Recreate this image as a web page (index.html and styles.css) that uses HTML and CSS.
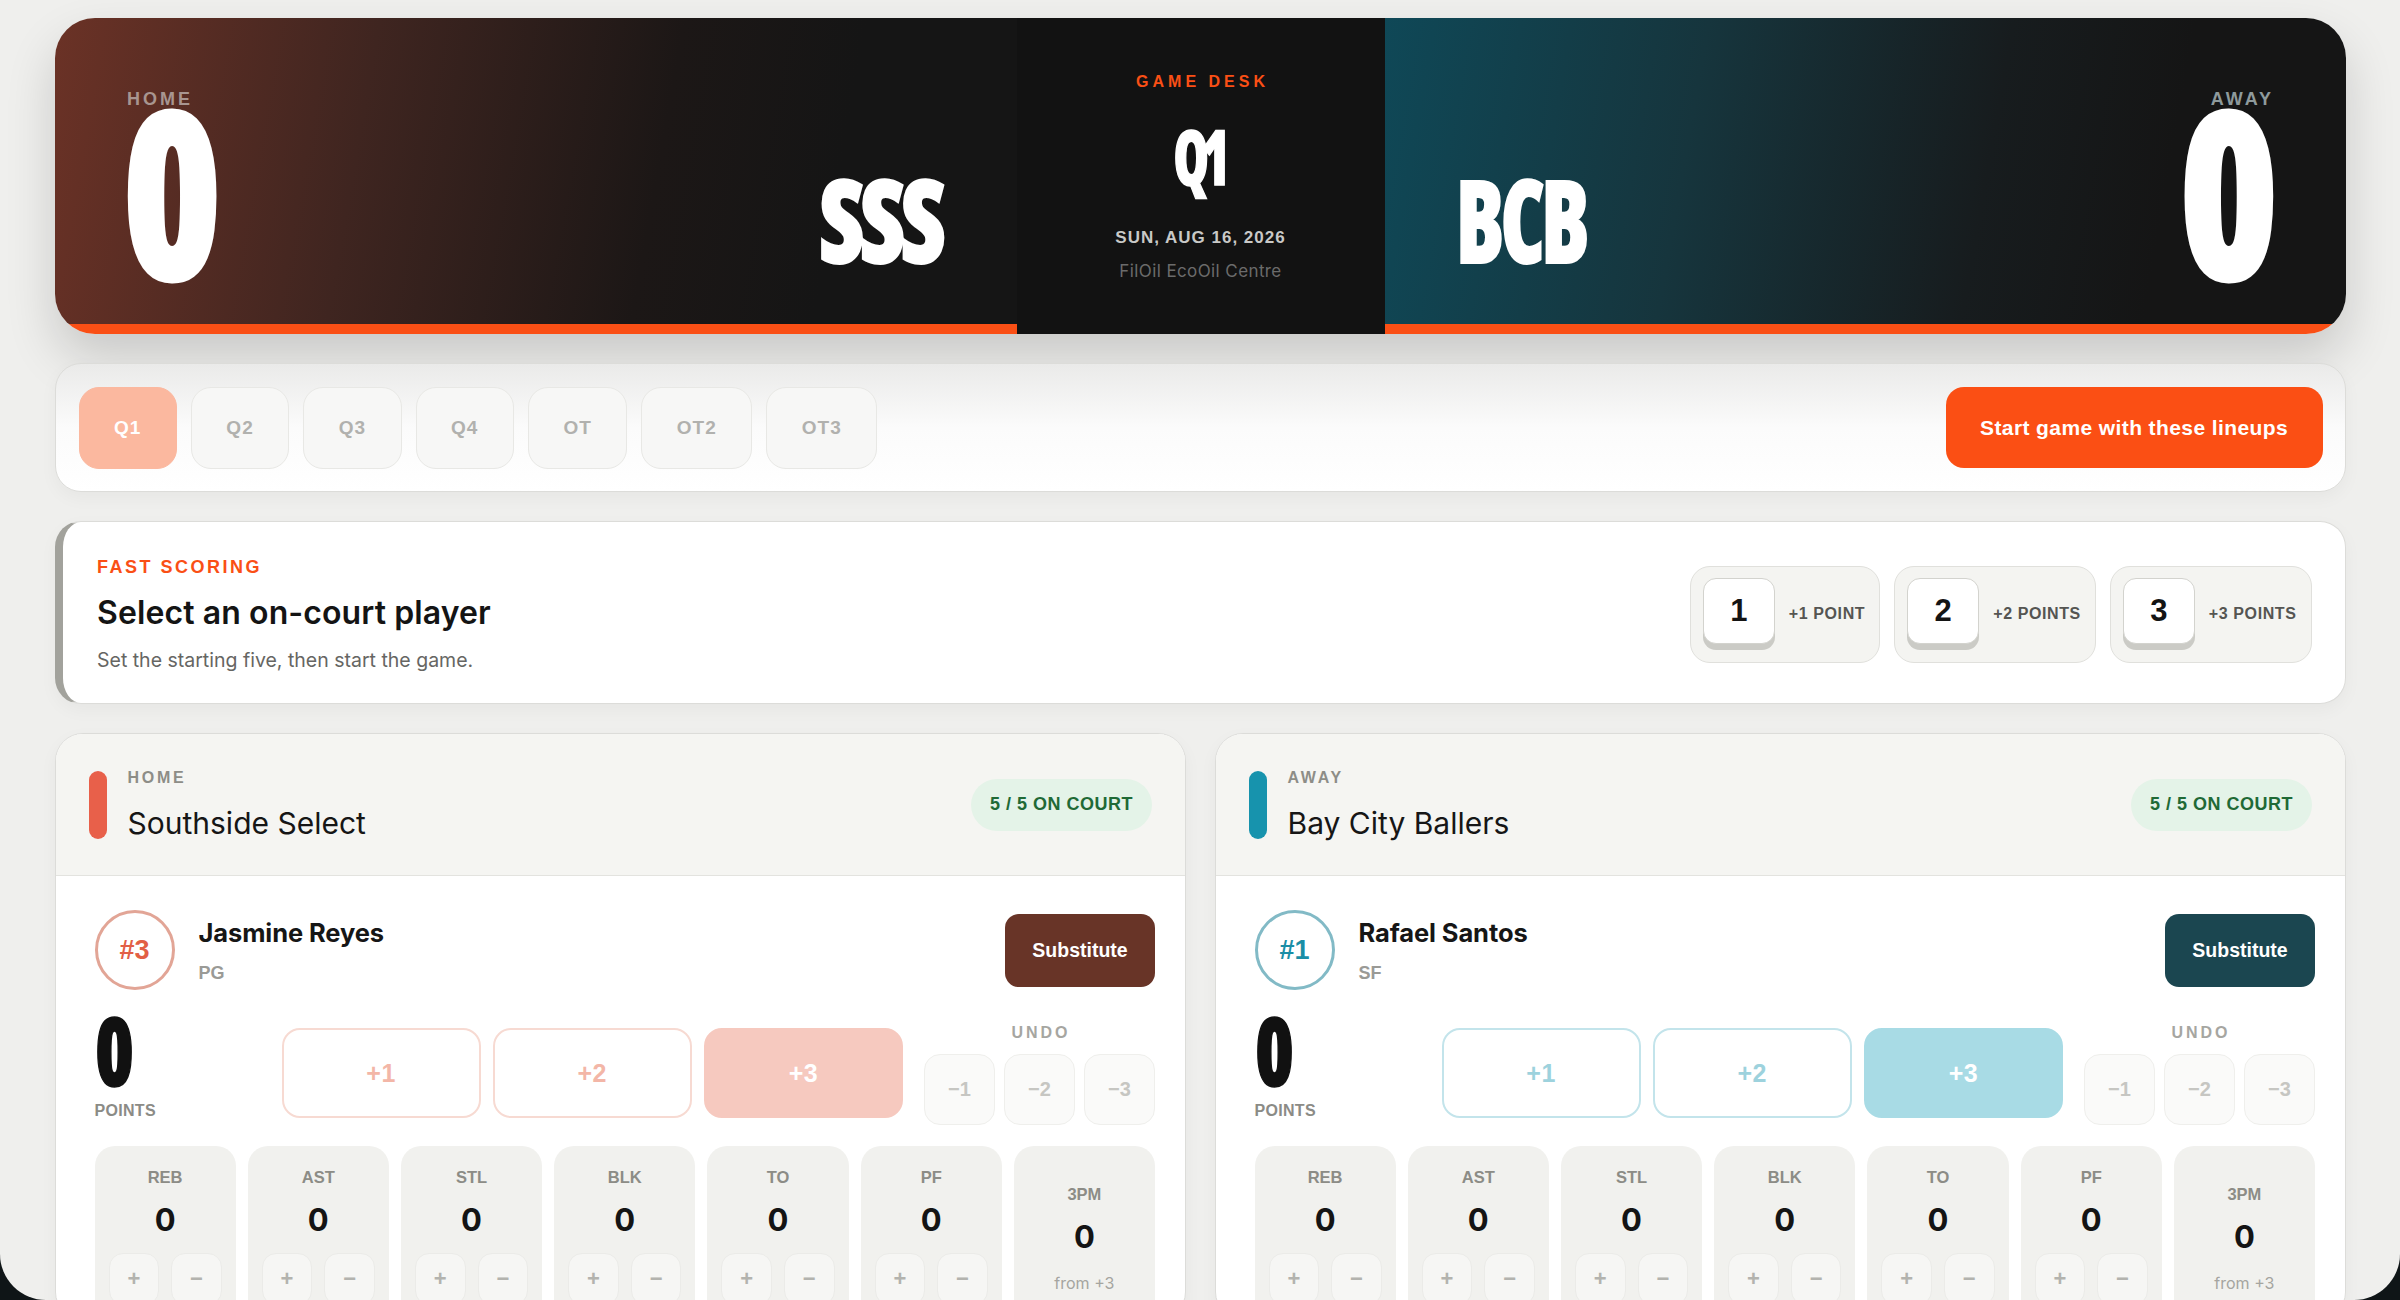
FILE: index.html
```html
<!DOCTYPE html>
<html lang="en">
<head>
<meta charset="utf-8">
<title>Game Desk</title>
<link rel="stylesheet" href="styles.css">
</head>
<body>
<div class="app">
  <section class="scoreboard">
    <div class="side home">
      <div class="score-block">
        <div class="side-label">HOME</div>
        <div class="big">0</div>
      </div>
      <div class="abbr">SSS</div>
    </div>
    <div class="center">
      <div class="desk-label">GAME DESK</div>
      <div class="period-big">Q1</div>
      <div class="date">SUN, AUG 16, 2026</div>
      <div class="venue">FilOil EcoOil Centre</div>
    </div>
    <div class="side away">
      <div class="abbr">BCB</div>
      <div class="score-block right">
        <div class="side-label">AWAY</div>
        <div class="big">0</div>
      </div>
    </div>
  </section>

  <section class="card periods">
    <div class="tabs">
      <button class="tab active">Q1</button>
      <button class="tab">Q2</button>
      <button class="tab">Q3</button>
      <button class="tab">Q4</button>
      <button class="tab">OT</button>
      <button class="tab">OT2</button>
      <button class="tab">OT3</button>
    </div>
    <button class="start-btn">Start game with these lineups</button>
  </section>

  <section class="card fast">
    <div class="fast-text">
      <div class="eyebrow">FAST SCORING</div>
      <h2 class="fast-title">Select an on-court player</h2>
      <p class="fast-sub">Set the starting five, then start the game.</p>
    </div>
    <div class="chips">
      <div class="chip"><span class="key">1</span><span class="chip-label">+1 POINT</span></div>
      <div class="chip"><span class="key">2</span><span class="chip-label">+2 POINTS</span></div>
      <div class="chip"><span class="key">3</span><span class="chip-label">+3 POINTS</span></div>
    </div>
  </section>

  <div class="teams">
    <section class="team team-home">
      <header class="team-head">
        <div class="team-id">
          <span class="team-bar"></span>
          <div>
            <div class="team-side">HOME</div>
            <div class="team-name">Southside Select</div>
          </div>
        </div>
        <span class="court-pill">5 / 5 ON COURT</span>
      </header>
      <div class="team-body">
        <div class="player-row">
          <span class="jersey">#3</span>
          <div class="player-info">
            <div class="player-name">Jasmine Reyes</div>
            <div class="player-pos">PG</div>
          </div>
          <button class="sub-btn">Substitute</button>
        </div>
        <div class="score-row">
          <div class="points">
            <div class="points-num">0</div>
            <div class="points-label">POINTS</div>
          </div>
          <button class="pbtn">+1</button>
          <button class="pbtn">+2</button>
          <button class="pbtn hot">+3</button>
          <div class="undo">
            <div class="undo-label">UNDO</div>
            <div class="undo-btns">
              <button class="ubtn">−1</button>
              <button class="ubtn">−2</button>
              <button class="ubtn">−3</button>
            </div>
          </div>
        </div>
        <div class="stats">
          <div class="stat"><div class="stat-label">REB</div><div class="stat-val">0</div><div class="stat-btns"><button class="sbtn">+</button><button class="sbtn">−</button></div></div>
          <div class="stat"><div class="stat-label">AST</div><div class="stat-val">0</div><div class="stat-btns"><button class="sbtn">+</button><button class="sbtn">−</button></div></div>
          <div class="stat"><div class="stat-label">STL</div><div class="stat-val">0</div><div class="stat-btns"><button class="sbtn">+</button><button class="sbtn">−</button></div></div>
          <div class="stat"><div class="stat-label">BLK</div><div class="stat-val">0</div><div class="stat-btns"><button class="sbtn">+</button><button class="sbtn">−</button></div></div>
          <div class="stat"><div class="stat-label">TO</div><div class="stat-val">0</div><div class="stat-btns"><button class="sbtn">+</button><button class="sbtn">−</button></div></div>
          <div class="stat"><div class="stat-label">PF</div><div class="stat-val">0</div><div class="stat-btns"><button class="sbtn">+</button><button class="sbtn">−</button></div></div>
          <div class="stat stat-3pm"><div class="stat-label">3PM</div><div class="stat-val">0</div><div class="stat-from">from +3</div></div>
        </div>
      </div>
    </section>

    <section class="team team-away">
      <header class="team-head">
        <div class="team-id">
          <span class="team-bar"></span>
          <div>
            <div class="team-side">AWAY</div>
            <div class="team-name">Bay City Ballers</div>
          </div>
        </div>
        <span class="court-pill">5 / 5 ON COURT</span>
      </header>
      <div class="team-body">
        <div class="player-row">
          <span class="jersey">#1</span>
          <div class="player-info">
            <div class="player-name">Rafael Santos</div>
            <div class="player-pos">SF</div>
          </div>
          <button class="sub-btn">Substitute</button>
        </div>
        <div class="score-row">
          <div class="points">
            <div class="points-num">0</div>
            <div class="points-label">POINTS</div>
          </div>
          <button class="pbtn">+1</button>
          <button class="pbtn">+2</button>
          <button class="pbtn hot">+3</button>
          <div class="undo">
            <div class="undo-label">UNDO</div>
            <div class="undo-btns">
              <button class="ubtn">−1</button>
              <button class="ubtn">−2</button>
              <button class="ubtn">−3</button>
            </div>
          </div>
        </div>
        <div class="stats">
          <div class="stat"><div class="stat-label">REB</div><div class="stat-val">0</div><div class="stat-btns"><button class="sbtn">+</button><button class="sbtn">−</button></div></div>
          <div class="stat"><div class="stat-label">AST</div><div class="stat-val">0</div><div class="stat-btns"><button class="sbtn">+</button><button class="sbtn">−</button></div></div>
          <div class="stat"><div class="stat-label">STL</div><div class="stat-val">0</div><div class="stat-btns"><button class="sbtn">+</button><button class="sbtn">−</button></div></div>
          <div class="stat"><div class="stat-label">BLK</div><div class="stat-val">0</div><div class="stat-btns"><button class="sbtn">+</button><button class="sbtn">−</button></div></div>
          <div class="stat"><div class="stat-label">TO</div><div class="stat-val">0</div><div class="stat-btns"><button class="sbtn">+</button><button class="sbtn">−</button></div></div>
          <div class="stat"><div class="stat-label">PF</div><div class="stat-val">0</div><div class="stat-btns"><button class="sbtn">+</button><button class="sbtn">−</button></div></div>
          <div class="stat stat-3pm"><div class="stat-label">3PM</div><div class="stat-val">0</div><div class="stat-from">from +3</div></div>
        </div>
      </div>
    </section>
  </div>
</div>
</body>
</html>
```

FILE: styles.css
```css
html {
  background: #0f1517;
}
body {
  margin: 0;
  font-family: "Inter", "Liberation Sans", sans-serif;
  color: #161616;
}
button {
  font: inherit;
  cursor: pointer;
}
h2, p {
  margin: 0;
}

.app {
  box-sizing: border-box;
  height: 1300px;
  overflow: hidden;
  background: #efefed;
  border-radius: 0 0 46px 46px;
  padding: 18px 54px 0 55px;
  display: flex;
  flex-direction: column;
  gap: 29px;
}

/* ---------- display font (condensed heavy) ---------- */
.big, .abbr, .period-big, .points-num {
  font-family: "Open Sans", "Noto Sans", sans-serif;
  font-stretch: 75%;
  font-weight: 800;
}

/* ---------- scoreboard ---------- */
.scoreboard {
  flex: none;
  height: 316px;
  border-radius: 40px;
  overflow: hidden;
  display: grid;
  grid-template-columns: 1fr 368px 1fr;
  box-shadow: 0 24px 50px rgba(0, 0, 0, 0.16);
}
.side {
  display: flex;
  justify-content: space-between;
  align-items: flex-end;
  padding: 0 72px 49.5px;
  border-bottom: 10px solid #fa4f15;
  color: #fff;
}
.home {
  background: linear-gradient(100deg, #6b3226 0%, #3f2520 32%, #1c1716 62%, #151515 80%);
}
.away {
  padding: 0 75px 49.5px;
  background: linear-gradient(100deg, #0f4857 0%, #16353d 32%, #171c1e 62%, #151515 80%);
}
.score-block.right {
  text-align: right;
}
.side-label {
  font-family: "Liberation Sans", sans-serif;
  font-weight: 700;
  font-size: 18px;
  line-height: 14px;
  letter-spacing: 3px;
}
.home .side-label {
  color: #a89590;
}
.away .side-label {
  color: #8e9a9c;
  margin-right: -3px;
}
.big {
  font-size: 234px;
  line-height: 0.72;
  -webkit-text-stroke: 3px #fff;
  transform: scaleX(0.865);
  transform-origin: left bottom;
}
.home .big {
  margin-left: -5px;
}
.right .big {
  transform-origin: right bottom;
  margin-right: -8px;
}
.abbr {
  font-size: 115px;
  line-height: 1;
  margin-bottom: -1.5px;
  letter-spacing: -5px;
  -webkit-text-stroke: 2px #fff;
}
.home .abbr {
  transform: scaleX(0.865);
  transform-origin: right bottom;
  margin-right: 3px;
}
.away .abbr {
  transform: scaleX(0.757);
  transform-origin: left bottom;
  margin-left: -4px;
}
.center {
  background: #121212;
  display: flex;
  flex-direction: column;
  align-items: center;
  justify-content: center;
  text-align: center;
}
.desk-label {
  font-family: "Liberation Sans", sans-serif;
  font-weight: 700;
  font-size: 16px;
  line-height: 20px;
  letter-spacing: 4px;
  margin-right: -4px;
  color: #fa4f15;
}
.period-big {
  color: #fff;
  font-size: 77px;
  line-height: 1;
  margin-top: 25px;
  letter-spacing: -10px;
  margin-right: 6px;
  -webkit-text-stroke: 1.5px #fff;
  transform: scaleX(0.74);
}
.date {
  font-family: "Liberation Sans", sans-serif;
  font-weight: 700;
  font-size: 17px;
  line-height: 20px;
  letter-spacing: 1px;
  color: #c9c9c7;
  margin-top: 34px;
}
.venue {
  font-size: 17px;
  line-height: 20px;
  letter-spacing: 0.4px;
  color: #6b6b6b;
  margin-top: 13px;
}

/* ---------- cards ---------- */
.card {
  flex: none;
  background: #fff;
  border: 1.5px solid #dcdcd9;
  border-radius: 26px;
  box-shadow: 0 6px 18px rgba(0, 0, 0, 0.04);
}
.periods {
  display: flex;
  justify-content: space-between;
  align-items: center;
  padding: 22.5px;
  background: linear-gradient(180deg, #eaeae9 0%, #fbfbfb 50%, #ffffff 100%);
}
.tabs {
  display: flex;
  gap: 14px;
}
.tab {
  height: 82px;
  padding: 0 34.5px;
  border-radius: 20px;
  border: 1.5px solid #e8e8e5;
  background: #f7f7f6;
  color: #b1b1ae;
  font-family: "Liberation Sans", sans-serif;
  font-weight: 700;
  font-size: 19px;
  letter-spacing: 1px;
}
.tab.active {
  background: #fbb89f;
  border-color: #fbb89f;
  color: #fff;
}
.start-btn {
  height: 81px;
  width: 377px;
  border: none;
  border-radius: 18px;
  background: #fb4f14;
  color: #fff;
  font-family: "Liberation Sans", sans-serif;
  font-weight: 700;
  font-size: 21px;
  letter-spacing: 0.4px;
}

.fast {
  display: flex;
  justify-content: space-between;
  align-items: center;
  border-left: 8px solid #a2a29c;
  padding: 34px 33.5px 31px 34px;
}
.eyebrow {
  font-family: "Liberation Sans", sans-serif;
  font-weight: 700;
  font-size: 18px;
  line-height: 22px;
  letter-spacing: 2.5px;
  color: #fa4f15;
}
.fast-title {
  font-size: 32px;
  line-height: 38px;
  font-weight: 600;
  letter-spacing: 0.1px;
  color: #141414;
  margin-top: 15.5px;
}
.fast-sub {
  font-size: 19.5px;
  line-height: 24px;
  color: #666663;
  margin-top: 16.5px;
}
.chips {
  display: flex;
  gap: 14px;
}
.chip {
  display: flex;
  align-items: flex-start;
  gap: 14px;
  padding: 11.5px 14px 17.5px 12px;
  border: 1.5px solid #e0e0dc;
  border-radius: 20px;
  background: #f4f4f1;
}
.key {
  box-sizing: border-box;
  width: 72px;
  height: 66px;
  display: flex;
  align-items: center;
  justify-content: center;
  background: #fff;
  border: 1.5px solid #d3d3ce;
  border-radius: 13px;
  box-shadow: 0 6px 0 #cbcbc6;
  font-family: "Liberation Sans", sans-serif;
  font-weight: 700;
  font-size: 31px;
  color: #141414;
}
.chip-label {
  align-self: center;
  margin-top: 6px;
  font-family: "Liberation Sans", sans-serif;
  font-weight: 700;
  font-size: 16px;
  letter-spacing: 0.6px;
  color: #555552;
}

/* ---------- teams ---------- */
.teams {
  display: grid;
  grid-template-columns: 1fr 1fr;
  gap: 29px;
}
.team {
  background: #fff;
  border: 1.5px solid #dcdcd9;
  border-radius: 28px;
  overflow: hidden;
  box-shadow: 0 6px 18px rgba(0, 0, 0, 0.04);
}
.team-head {
  height: 142px;
  box-sizing: border-box;
  background: #f5f5f2;
  border-bottom: 1.5px solid #e3e3df;
  padding: 0 33.5px 0 32.5px;
  display: flex;
  align-items: center;
  justify-content: space-between;
}
.team-id {
  display: flex;
  align-items: center;
  gap: 21px;
}
.team-bar {
  width: 18px;
  height: 68px;
  border-radius: 9px;
}
.team-home .team-bar { background: #e8604a; }
.team-away .team-bar { background: #1793ad; }
.team-side {
  font-family: "Liberation Sans", sans-serif;
  font-weight: 700;
  font-size: 16px;
  line-height: 20px;
  letter-spacing: 2.7px;
  color: #8d8d87;
}
.team-name {
  font-size: 30px;
  line-height: 36px;
  margin-top: 17px;
  color: #161616;
}
.court-pill {
  height: 52px;
  display: flex;
  align-items: center;
  padding: 0 18.5px;
  border-radius: 26px;
  background: #e4f3e8;
  color: #1f6a36;
  font-family: "Liberation Sans", sans-serif;
  font-weight: 700;
  font-size: 18px;
  letter-spacing: 0.5px;
}

.team-body {
  padding: 34px 30px 0 38.5px;
}
.player-row {
  display: flex;
  align-items: center;
}
.jersey {
  box-sizing: border-box;
  width: 80px;
  height: 80px;
  border-radius: 50%;
  display: flex;
  align-items: center;
  justify-content: center;
  font-family: "Liberation Sans", sans-serif;
  font-weight: 700;
  font-size: 27px;
  flex: none;
}
.team-home .jersey { border: 3px solid #e2a596; color: #e25f45; }
.team-away .jersey { border: 3px solid #82bac6; color: #1a8ea6; }
.player-info {
  margin-left: 24px;
}
.player-name {
  font-size: 25.5px;
  line-height: 30px;
  font-weight: 700;
  letter-spacing: -0.1px;
}
.player-pos {
  font-family: "Liberation Sans", sans-serif;
  font-weight: 700;
  font-size: 18px;
  line-height: 20px;
  color: #9a9a96;
  margin-top: 15px;
}
.sub-btn {
  margin-left: auto;
  width: 150px;
  height: 73px;
  border: none;
  border-radius: 14px;
  color: #fff;
  font-family: "Liberation Sans", sans-serif;
  font-weight: 700;
  font-size: 19.5px;
}
.team-home .sub-btn { background: #683427; }
.team-away .sub-btn { background: #1b4650; }

.score-row {
  display: flex;
  align-items: flex-start;
  gap: 12px;
  margin-top: 24px;
}
.points {
  width: 175px;
  flex: none;
}
.points-num {
  font-size: 95px;
  line-height: 0.75;
  color: #111;
  -webkit-text-stroke: 1.5px #111;
  transform: scaleX(0.83);
  transform-origin: left bottom;
}
.points-label {
  font-family: "Liberation Sans", sans-serif;
  font-weight: 700;
  font-size: 16px;
  line-height: 20px;
  letter-spacing: 0.3px;
  color: #8b8b86;
  margin-top: 16px;
}
.pbtn {
  flex: 1;
  height: 90px;
  margin-top: 14px;
  border-radius: 18px;
  background: #fff;
  font-family: "Liberation Sans", sans-serif;
  font-weight: 700;
  font-size: 25px;
  letter-spacing: 0.5px;
}
.team-home .pbtn { border: 2px solid #f7dad2; color: #f3b6a7; }
.team-away .pbtn { border: 2px solid #c3e4eb; color: #9dd2dd; }
.team-home .pbtn.hot { background: #f6c9bf; border-color: #f6c9bf; color: #fff; }
.team-away .pbtn.hot { background: #a8dbe5; border-color: #a8dbe5; color: #fff; }
.undo {
  width: 231px;
  flex: none;
  margin-left: 9px;
  display: flex;
  flex-direction: column;
  align-items: center;
}
.undo-label {
  font-family: "Liberation Sans", sans-serif;
  font-weight: 700;
  font-size: 16px;
  line-height: 20px;
  letter-spacing: 3px;
  margin-right: -3px;
  color: #a6a6a1;
  margin-top: 8.5px;
}
.undo-btns {
  display: flex;
  gap: 9px;
  margin-top: 11.5px;
}
.ubtn {
  width: 71px;
  height: 71px;
  border-radius: 16px;
  border: 1.5px solid #efefec;
  background: #fafaf9;
  color: #c6c6c2;
  font-family: "Liberation Sans", sans-serif;
  font-weight: 700;
  font-size: 20px;
}

.stats {
  display: grid;
  grid-template-columns: repeat(7, 1fr);
  gap: 12px;
  margin-top: 21px;
}
.stat {
  background: #f1f1ee;
  border-radius: 20px;
  padding: 21px 14px 14px;
  text-align: center;
  display: flex;
  flex-direction: column;
  align-items: stretch;
}
.stat-label {
  font-family: "Liberation Sans", sans-serif;
  font-weight: 700;
  font-size: 16.5px;
  line-height: 20px;
  color: #8c8c86;
}
.stat-val {
  font-size: 31px;
  line-height: 35px;
  font-weight: 700;
  color: #141414;
  margin-top: 14.5px;
}
.stat-btns {
  display: flex;
  gap: 12px;
  margin-top: 16px;
}
.sbtn {
  flex: 1;
  height: 52px;
  border-radius: 14px;
  border: 1.5px solid #ebebe8;
  background: #f6f6f4;
  color: #b3b3ae;
  font-family: "Liberation Sans", sans-serif;
  font-weight: 700;
  font-size: 22px;
}
.stat-3pm {
  justify-content: center;
  padding-top: 26px;
}
.stat-3pm .stat-val {
  margin-top: 15px;
}
.stat-from {
  font-size: 16px;
  line-height: 20px;
  color: #a5a5a0;
  margin-top: 19px;
}
```
